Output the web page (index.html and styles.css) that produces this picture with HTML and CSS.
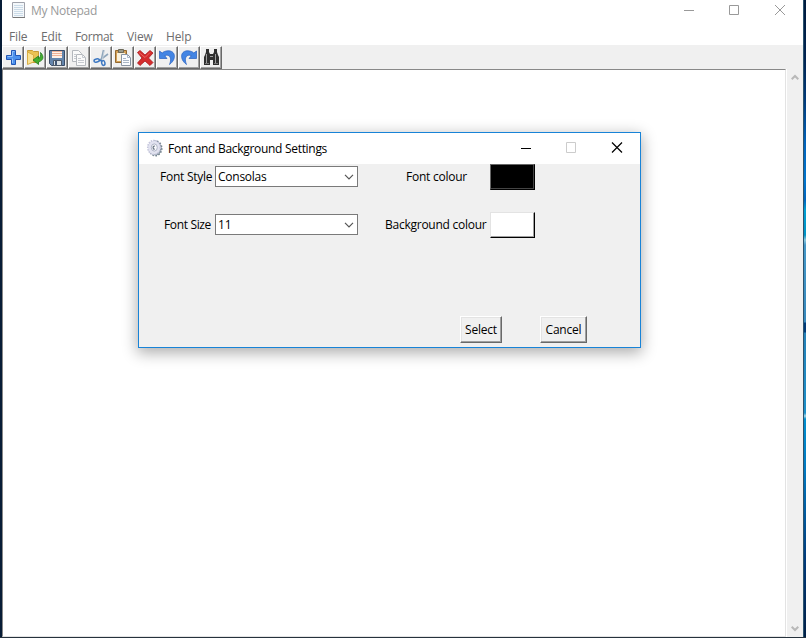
FILE: index.html
```html
<!DOCTYPE html>
<html lang="en">
<head>
<meta charset="utf-8">
<title>My Notepad</title>
<link rel="stylesheet" href="styles.css">
</head>
<body>
<main class="window">
  <header class="titlebar">
    <svg class="app-icon" width="14" height="17" viewBox="0 0 14 17"><path fill="#f4f8fb" stroke="#a0a3ac" d="M.5.5h12v15H.5z"/><path stroke="#cbdbe8" d="M2 3.500h9M2 5.500h9M2 7.500h9M2 9.500h9M2 11.500h9M2 13.500h9"/><path stroke="#777" d="M1 15.500h12"/></svg>
    <span class="title">My Notepad</span>
    <svg class="controls" width="104" height="12" viewBox="0 0 104 12" fill="none" stroke="#999"><path d="M0 5.500h10M45.500.500h9v9h-9zM91 0l10 10M101 0L91 10"/></svg>
  </header>
  <nav class="menu"><span class="m-file">File</span><span class="m-edit">Edit</span><span class="m-format">Format</span><span class="m-view">View</span><span class="m-help">Help</span></nav>
  <div class="toolbar">
    <button class="tool"><svg width="18" height="18" viewBox="0 0 18 18"><path fill="#4c91ed" stroke="#2357b5" d="M7.500 1.500h4v5h5v4h-5v5h-4v-5h-5v-4h5z"/><path stroke="#8fc0fa" fill="none" d="M8.500 14V9.500M3.500 7.500h5v-5h2"/></svg></button>
    <button class="tool"><svg width="18" height="18" viewBox="0 0 18 18"><path fill="#e9c253" stroke="#c79a35" d="M1.500 1.500h5l1 1h5v11h-11z"/><path fill="#fae393" stroke="#d9ae45" d="M1.500 15.500V3l6 3v7z"/><path fill="#42ae2f" stroke="#21791d" stroke-width=".8" d="M14.500 3.500c4 4 3 8-2 9.500v2.500L7 11l5.500-4v2.500c2-1 2.500-3 2-6z"/></svg></button>
    <button class="tool"><svg width="18" height="18" viewBox="0 0 18 18"><path fill="#6485ac" stroke="#3b4d68" d="M1.500 1.500h15v15h-13l-2-2z"/><path fill="#fff1e8" d="M4 2h10v7H4z"/><path stroke="#efb196" d="M4 2.500h10M4 4.500h10M4 6.500h10"/><path fill="#dce2e8" stroke="#4c5868" d="M5.500 11.500h8v5h-8z"/><path fill="#405675" d="M7 12h2v4H7z"/></svg></button>
    <button class="tool"><svg width="18" height="18" viewBox="0 0 18 18"><g fill="#fafafa" stroke="#b4b8bd"><path d="M2.500 1.500h6l3 3v8h-9z"/><path d="M6.500 5.500h6l3 3v8h-9z"/></g><path fill="none" stroke="#c6cad0" d="M12.500 5.500v3h3M8 9.500h3M8 11.500h6M8 13.500h6M4 5.500h2M4 7.500h2M4 9.500h2"/></svg></button>
    <button class="tool"><svg width="18" height="18" viewBox="0 0 18 18" fill="none"><path stroke="#8fa6bb" stroke-width="1.600" d="M11.500 1L9.500 10M16 5l-8 6"/><path stroke="#c5d1dc" d="M12.500 1l-2 9"/><g stroke="#3d78c2" stroke-width="1.500"><ellipse cx="4.700" cy="11.500" rx="2.700" ry="1.600" transform="rotate(-12 4.700 11.500)"/><ellipse cx="11.300" cy="14" rx="1.600" ry="2.400" transform="rotate(-12 11.300 14)"/><path d="M7 11l3 1"/></g></svg></button>
    <button class="tool"><svg width="18" height="18" viewBox="0 0 18 18"><path fill="#d3a057" stroke="#93692e" d="M1.500 1.500h11v12h-11z"/><path fill="#faf1dc" d="M3 4h8v8H3z"/><path fill="#9b9b8c" stroke="#6e6a59" d="M4.500.500h5v3h-5z"/><path fill="#fafcff" stroke="#8994a2" d="M7.500 5.500h6l3 3v8h-9z"/><path fill="none" stroke="#a9b6c6" d="M13.500 5.500v3h3M9 9.500h3M9 11.500h6M9 13.500h6"/></svg></button>
    <button class="tool"><svg width="18" height="18" viewBox="0 0 18 18"><path fill="#d42c2d" stroke="#a9171c" stroke-width=".8" d="M1.500 3.500L4 1.500l5 4.500 5-4.500L17 4l-4.500 5 4.500 4.500-3 3-5-4.500-5 4.500L1.500 14 6 9z"/><path fill="none" stroke="#ee6661" d="M3 3.500L9 8.500l5-5"/></svg></button>
    <button class="tool"><svg width="18" height="18" viewBox="0 0 18 18"><path fill="#4385e4" stroke="#275ebe" stroke-width=".7" d="M1.500 2v7.500H9L6.700 6.700C11 4.800 14.500 8.500 11.500 15.500 19 10 17.500 1.500 10 1.800 7.500 1.900 5.500 2.700 4.200 4z"/></svg></button>
    <button class="tool"><svg class="flipped" width="18" height="18" viewBox="0 0 18 18"><path fill="#4385e4" stroke="#275ebe" stroke-width=".7" d="M1.500 2v7.500H9L6.700 6.700C11 4.800 14.500 8.500 11.500 15.500 19 10 17.500 1.500 10 1.800 7.500 1.900 5.500 2.700 4.200 4z"/></svg></button>
    <button class="tool"><svg width="18" height="18" viewBox="0 0 18 18"><path fill="#303030" d="M4 0h3v3l1 2h3l1-2V0h3v3l1 3 1 2v8h-6v-5H8v5H2V8l1-2 1-3z"/><path stroke="#a0a0a0" d="M4.500 5v9M13.500 5v9M8 7.500h3"/><path stroke="#777" d="M3 14.500h4M12 14.500h4"/></svg></button>
  </div>
  <section class="workspace">
    <div class="editor"></div>
    <div class="scrollbar"><svg width="8" height="7" viewBox="0 0 8 7"><path d="M.7 5.300L4 2l3.300 3.300"/></svg><svg class="flipped-y" width="8" height="7" viewBox="0 0 8 7"><path d="M.7 5.300L4 2l3.300 3.300"/></svg></div>
  </section>
</main>
<div class="desktop-edge"></div>

<section class="dialog">
  <header class="dialog-title">
    <svg class="gear" width="18" height="18" viewBox="0 0 18 18"><ellipse cx="9.500" cy="9.300" rx="6.200" ry="7.300" fill="#8f9da8" stroke="#70808c" stroke-width="1.700" stroke-dasharray="1.500 1.500"/><ellipse cx="8" cy="8.500" rx="6.300" ry="7" fill="#e2e3f0" stroke="#c5c6dc" stroke-width="1.500" stroke-dasharray="1.500 1"/><ellipse cx="8.300" cy="8.500" rx="3" ry="3.600" fill="#f8f9fc" stroke="#b0b5c6"/><path fill="none" stroke="#697482" stroke-width="1.200" d="M8.800 7.200c-2.300-.5-2.300 3.300 0 2.800"/></svg>
    <span class="heading">Font and Background Settings</span>
    <svg class="controls" width="104" height="12" viewBox="0 0 104 12" fill="none"><path stroke="#000" d="M0 6.500h10"/><path stroke="#000" stroke-width="1.200" d="M91 .500l10 10M101 .500l-10 10"/><path stroke="#ccc" d="M45.500.500h9v10h-9z"/></svg>
  </header>
  <div class="fields">
    <label class="l-style">Font Style</label>
    <div class="combo"><span class="v-font">Consolas</span><svg width="10" height="6" viewBox="0 0 10 6"><path d="M1 .800l4 4 4-4"/></svg></div>
    <label class="l-color">Font colour</label>
    <button class="swatch black"></button>
    <label class="l-size">Font Size</label>
    <div class="combo"><span class="v-size">11</span><svg width="10" height="6" viewBox="0 0 10 6"><path d="M1 .800l4 4 4-4"/></svg></div>
    <label class="l-back">Background colour</label>
    <button class="swatch white"></button>
  </div>
  <footer class="actions"><button class="action select"><span>Select</span></button><button class="action cancel"><span>Cancel</span></button></footer>
</section>
</body>
</html>
```
FILE: styles.css
```css
* { box-sizing: border-box; }
body {
  margin: 0;
  width: 806px;
  height: 638px;
  overflow: hidden;
  display: flex;
  position: relative;
  background: #26323d;
  font: 12px/16px "Open Sans", "Noto Sans", sans-serif;
  color: #000;
}
button { margin: 0; padding: 0; font: inherit; color: inherit; background: #f0f0f0; }
svg { display: block; flex: none; }
span, label { white-space: nowrap; }
.window {
  width: 803px;
  height: 637px;
  border-left: 2px solid #071c36;
  background: #fff;
  display: flex;
  flex-direction: column;
}
.titlebar { height: 25px; display: flex; padding-left: 10px; }
.app-icon { margin-top: 2px; }
.title { margin: 3px 0 0 5px; color: #999; letter-spacing: -.25px; }
.controls { margin-left: auto; }
.titlebar .controls { margin-top: 5px; margin-right: 15px; }
.menu {
  height: 20px;
  padding: 4px 0 0 7px;
  display: flex;
  color: #6d6d6d;
  letter-spacing: -.15px;
}
.m-file { width: 32px; }
.m-edit { width: 34px; }
.m-format { width: 52px; letter-spacing: -.35px; }
.m-view { width: 39px; }
.toolbar { height: 24px; background: #f0f0f0; display: flex; padding-top: 1px; }
.tool {
  width: 22px;
  height: 23px;
  border: 1px solid;
  border-color: #fff #696969 #696969 #fff;
  box-shadow: inset -1px -1px #a0a0a0;
  display: flex;
  align-items: flex-start;
  justify-content: center;
  padding: 2px 1px 0 0;
}
.flipped { transform: scaleX(-1); }
.flipped-y { transform: scaleY(-1); }
.workspace { flex: 1; display: flex; }
.editor {
  width: 784px;
  border: 1px solid #888;
  border-right-color: #e3e3e3;
  border-bottom-color: #e3e3e3;
  background: #fff;
}
.scrollbar {
  flex: 1;
  background: #f0f0f0;
  border-left: 1px solid #fff;
  display: flex;
  flex-direction: column;
  justify-content: space-between;
  align-items: center;
  padding: 5px 1px 5px 0;
}
.scrollbar path { fill: none; stroke: #b8b8b8; stroke-width: 2; }
.desktop-edge {
  width: 3px;
  height: 637px;
  border-left: 1px solid #2c536e;
  background: linear-gradient(#001b3d 0, #002452 60px, #003a7a 100px, #0064bd 145px, #0075cd 180px, #0064bd 200px, #00a0d3 210px, #0093c5 235px, #8bc8df 240px, #4498c8 245px, #3788bc 322px, #003a78 323px, #003a78 332px, #2481b8 333px, #1d90c9 413px, #a3d7e8 416px, #008fcf 419px, #0079c1 470px, #003a7a 560px, #001f45 637px);
}
.dialog {
  position: absolute;
  left: 138px;
  top: 132px;
  width: 503px;
  height: 216px;
  border: 1px solid #1883d7;
  background: #f0f0f0;
  box-shadow: 0 4px 14px 1px rgba(0, 0, 0, .32);
  display: flex;
  flex-direction: column;
}
.dialog-title { height: 31px; background: #fff; display: flex; padding-left: 7px; }
.gear { margin-top: 6px; }
.heading { margin: 8px 0 0 4px; letter-spacing: -.3px; }
.dialog-title .controls { margin-top: 9px; margin-right: 15px; }
.fields {
  display: grid;
  grid-template-columns: 76px 143px 132px 45px;
  grid-template-rows: 26px 26px;
  row-gap: 22px;
}
.fields label { padding-top: 5px; letter-spacing: -.25px; }
.l-style { padding-left: 21px; }
.l-size { padding-left: 25px; }
.fields .l-size { letter-spacing: -.35px; }
.l-color { padding-left: 48px; }
.l-back { padding-left: 27px; }
.combo {
  height: 21px;
  margin-top: 2px;
  padding: 1px 3px 0 2px;
  border: 1px solid #7a7a7a;
  background: #fff;
  display: flex;
  align-items: center;
  justify-content: space-between;
}
.v-font { letter-spacing: -.25px; }
.combo path { fill: none; stroke: #555; stroke-width: 1.2; }
.swatch { border: 1px solid; }
.black { background: #000; border-color: #666 #000 #000 #666; box-shadow: inset -1px -1px #444; }
.white { background: #fff; border-color: #e3e3e3 #000 #000 #e3e3e3; box-shadow: inset -1px -1px #a0a0a0; }
.actions { display: flex; gap: 38px; margin: 78px 0 0 321px; }
.action {
  height: 27px;
  border: 1px solid;
  border-color: #fff #696969 #696969 #fff;
  box-shadow: inset -1px -1px #a0a0a0, inset 1px 1px #e3e3e3;
  letter-spacing: -.2px;
}
.select { width: 42px; }
.cancel { width: 47px; }
```
